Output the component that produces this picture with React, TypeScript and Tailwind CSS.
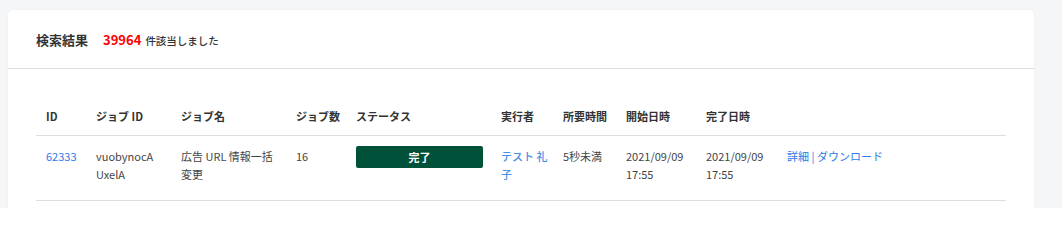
import React from "react"

interface JobRow {
  id: number
  jobId: string[]
  jobName: string
  jobCount: number
  status: string
  user: string
  duration: string
  startedAt: string
  finishedAt: string
}

const rows: JobRow[] = [
  {
    id: 62333,
    jobId: ["vuobynocA", "UxelA"],
    jobName: "広告 URL 情報一括変更",
    jobCount: 16,
    status: "完了",
    user: "テスト 礼子",
    duration: "5秒未満",
    startedAt: "2021/09/09 17:55",
    finishedAt: "2021/09/09 17:55",
  },
]

export default function App() {
  return (
    <div
      className="h-[208px] overflow-hidden bg-[#f5f6f8] pt-[10px] pl-[8px] pr-[28px]"
      style={{ fontFamily: '"Noto Sans CJK JP", "Noto Sans", sans-serif' }}
    >
      <div className="rounded-[5px] bg-white pb-8 shadow-[0_0_3px_rgba(0,0,0,0.04)]">
        {/* 検索結果ヘッダー */}
        <div className="flex items-baseline px-7 pt-[21px] pb-[18px] leading-[18px] border-b border-[#dedede]">
          <span className="text-[13px] font-bold text-[#333]">検索結果</span>
          <span className="ml-[15px] text-[13px] font-bold text-[#f00]">39964</span>
          <span className="ml-[4px] text-[10.5px] font-medium text-[#333]">件該当しました</span>
        </div>

        <div className="px-7 pt-[28px]">
          <table className="w-full table-fixed border-collapse text-[11px] leading-[18px] text-[#444]">
            <thead>
              <tr className="border-b border-[#dedede] text-left text-[#333] whitespace-nowrap">
                <th className="w-[50px] px-[10px] py-[10px] font-bold">ID</th>
                <th className="w-[85px] px-[10px] py-[10px] font-bold">ジョブ ID</th>
                <th className="w-[115px] px-[10px] py-[10px] font-bold">ジョブ名</th>
                <th className="w-[60px] px-[10px] py-[10px] font-bold">ジョブ数</th>
                <th className="w-[145px] px-[10px] py-[10px] font-bold">ステータス</th>
                <th className="w-[62px] px-[10px] py-[10px] font-bold">実行者</th>
                <th className="w-[63px] px-[10px] py-[10px] font-bold">所要時間</th>
                <th className="w-[80px] px-[10px] py-[10px] font-bold">開始日時</th>
                <th className="w-[81px] px-[10px] py-[10px] font-bold">完了日時</th>
                <th className="px-[10px] py-[10px]"></th>
              </tr>
            </thead>
            <tbody>
              {rows.map((row) => (
                <tr key={row.id} className="border-b border-[#dedede] align-top">
                  <td className="px-[10px] pt-[11px] pb-[17px]">
                    <a className="text-[#2f7be8]">{row.id}</a>
                  </td>
                  <td className="px-[10px] pt-[11px] pb-[17px]">
                    {row.jobId.map((part) => (
                      <span key={part} className="block">
                        {part}
                      </span>
                    ))}
                  </td>
                  <td className="px-[10px] pt-[11px] pb-[17px]">{row.jobName}</td>
                  <td className="px-[10px] pt-[11px] pb-[17px]">{row.jobCount}</td>
                  <td className="px-[10px] pt-[10px] pb-[17px]">
                    <div className="flex h-[22px] w-[127px] items-center justify-center rounded-[2px] bg-[#00513a] font-bold text-white">
                      {row.status}
                    </div>
                  </td>
                  <td className="pl-[10px] pr-[4px] pt-[11px] pb-[17px] font-medium text-[#4a90e2]">{row.user}</td>
                  <td className="px-[10px] pt-[11px] pb-[17px] whitespace-nowrap">{row.duration}</td>
                  <td className="px-[10px] pt-[11px] pb-[17px]">
                    {row.startedAt.split(" ")[0]}
                    <br />
                    {row.startedAt.split(" ")[1]}
                  </td>
                  <td className="px-[10px] pt-[11px] pb-[17px]">
                    {row.finishedAt.split(" ")[0]}
                    <br />
                    {row.finishedAt.split(" ")[1]}
                  </td>
                  <td className="px-[10px] pt-[11px] pb-[17px] text-[#2f7be8]">
                    <a>詳細</a> | <a>ダウンロード</a>
                  </td>
                </tr>
              ))}
            </tbody>
          </table>
        </div>
      </div>
    </div>
  )
}
